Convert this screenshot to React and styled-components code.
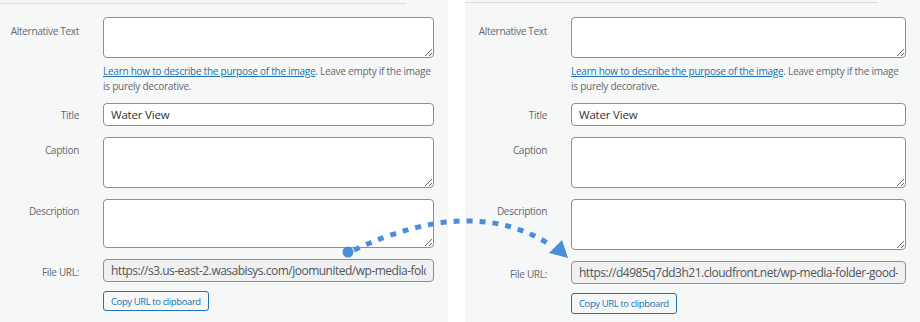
import React from "react";
import styled, { createGlobalStyle } from "styled-components";

const GlobalStyle = createGlobalStyle`
  html, body {
    margin: 0;
    padding: 0;
    background: #ffffff;
  }
  body {
    font-family: "Open Sans", "Noto Sans", sans-serif;
  }
`;

const panels = [
  {
    id: "left",
    width: 448,
    lineTop: 3,
    lineWidth: 406,
    labelWidth: 79,
    fieldWidth: 331,
    url: "https://s3.us-east-2.wasabisys.com/joomunited/wp-media-folder-good-hosting/2021/05/water-view.jpg",
    descHeight: 49,
    buttonHeight: 20,
  },
  {
    id: "right",
    width: 455,
    lineTop: 2,
    lineWidth: 413,
    labelWidth: 82,
    fieldWidth: 335,
    url: "https://d4985q7dd3h21.cloudfront.net/wp-media-folder-good-hosting/2021/05/water-view.jpg",
    descHeight: 51,
    buttonHeight: 21,
  },
];

const FormPanel = ({ panel }) => (
  <Panel $width={panel.width}>
    <Divider $top={panel.lineTop} $width={panel.lineWidth} />
    <Form $label={panel.labelWidth} $field={panel.fieldWidth} $top={16 - panel.lineTop}>
      <Label $pad={6}>Alternative Text</Label>
      <Field>
        <TextArea $h={41} />
        <Help>
          <HelpLink href="#">Learn how to describe the purpose of the image</HelpLink>. Leave
          empty if the image is purely decorative.
        </Help>
      </Field>

      <Label $pad={4}>Title</Label>
      <Field>
        <TextInput defaultValue="Water View" />
      </Field>

      <Label>Caption</Label>
      <Field>
        <TextArea $h={51} />
      </Field>

      <Label $pad={4}>Description</Label>
      <Field>
        <TextArea $h={panel.descHeight} />
      </Field>

      <Label>File URL:</Label>
      <Field>
        <UrlInput readOnly value={panel.url} />
        <CopyButton $h={panel.buttonHeight}>Copy URL to clipboard</CopyButton>
      </Field>
    </Form>
  </Panel>
);

const Arrow = () => (
  <Overlay width="920" height="322" viewBox="0 0 920 322">
    <path
      d="M 354 250 Q 474 194 552 246"
      fill="none"
      stroke="#4a8fd6"
      strokeWidth="5"
      strokeDasharray="6 7"
    />
    <circle cx="348" cy="252" r="5.5" fill="#4a8fd6" />
    <polygon points="549,253 562,240 568,258" fill="#4a8fd6" />
  </Overlay>
);

export default function App() {
  return (
    <>
      <GlobalStyle />
      <Page>
        <FormPanel panel={panels[0]} />
        <Gutter />
        <FormPanel panel={panels[1]} />
        <Arrow />
      </Page>
    </>
  );
}

const Page = styled.div`
  position: relative;
  display: flex;
  width: 920px;
  height: 322px;
  overflow: hidden;
  background: #ffffff;
`;

const Gutter = styled.div`
  width: 17px;
  flex-shrink: 0;
  background: #ffffff;
`;

const Panel = styled.section`
  width: ${(p) => p.$width}px;
  flex-shrink: 0;
  background: #f6f7f7;
  display: flex;
  flex-direction: column;
`;

const Divider = styled.div`
  margin-top: ${(p) => p.$top}px;
  width: ${(p) => p.$width}px;
  height: 1px;
  background: #dcdcde;
`;

const Form = styled.div`
  display: grid;
  grid-template-columns: ${(p) => p.$label}px ${(p) => p.$field}px;
  column-gap: 24px;
  row-gap: 11px;
  padding-top: ${(p) => p.$top}px;
`;

const Label = styled.label`
  text-align: right;
  font-size: 10px;
  letter-spacing: -0.3px;
  line-height: 16px;
  padding-top: ${(p) => p.$pad ?? 5}px;
  color: #646970;
  white-space: nowrap;
`;

const Field = styled.div`
  display: flex;
  flex-direction: column;
  align-items: flex-start;
`;

const TextArea = styled.textarea`
  box-sizing: border-box;
  width: 100%;
  height: ${(p) => p.$h}px;
  margin: 0;
  border: 1px solid #8c8f94;
  border-radius: 4px;
  background: #ffffff;
  resize: vertical;
  font-family: inherit;
`;

const Help = styled.p`
  margin: 6px 0 -2px;
  font-size: 10px;
  letter-spacing: -0.25px;
  line-height: 15px;
  color: #646970;
`;

const HelpLink = styled.a`
  color: #2271b1;
  text-decoration: underline;
`;

const TextInput = styled.input`
  box-sizing: border-box;
  width: 100%;
  height: 23px;
  margin: 0;
  padding: 0 7px;
  border: 1px solid #8c8f94;
  border-radius: 4px;
  background: #ffffff;
  font-family: inherit;
  font-size: 11.5px;
  letter-spacing: -0.2px;
  color: #2c3338;
  outline: none;
`;

const UrlInput = styled(TextInput)`
  background: #f0f0f1;
  color: #50575e;
  font-size: 12px;
  letter-spacing: -0.5px;
`;

const CopyButton = styled.button`
  margin-top: 9px;
  height: ${(p) => p.$h}px;
  padding: 0 7px;
  border: 1px solid #2271b1;
  border-radius: 3px;
  background: #f6f7f7;
  color: #2271b1;
  font-family: inherit;
  font-size: 9.5px;
  letter-spacing: -0.4px;
  cursor: pointer;
`;

const Overlay = styled.svg`
  position: absolute;
  left: 0;
  top: 0;
  pointer-events: none;
`;
